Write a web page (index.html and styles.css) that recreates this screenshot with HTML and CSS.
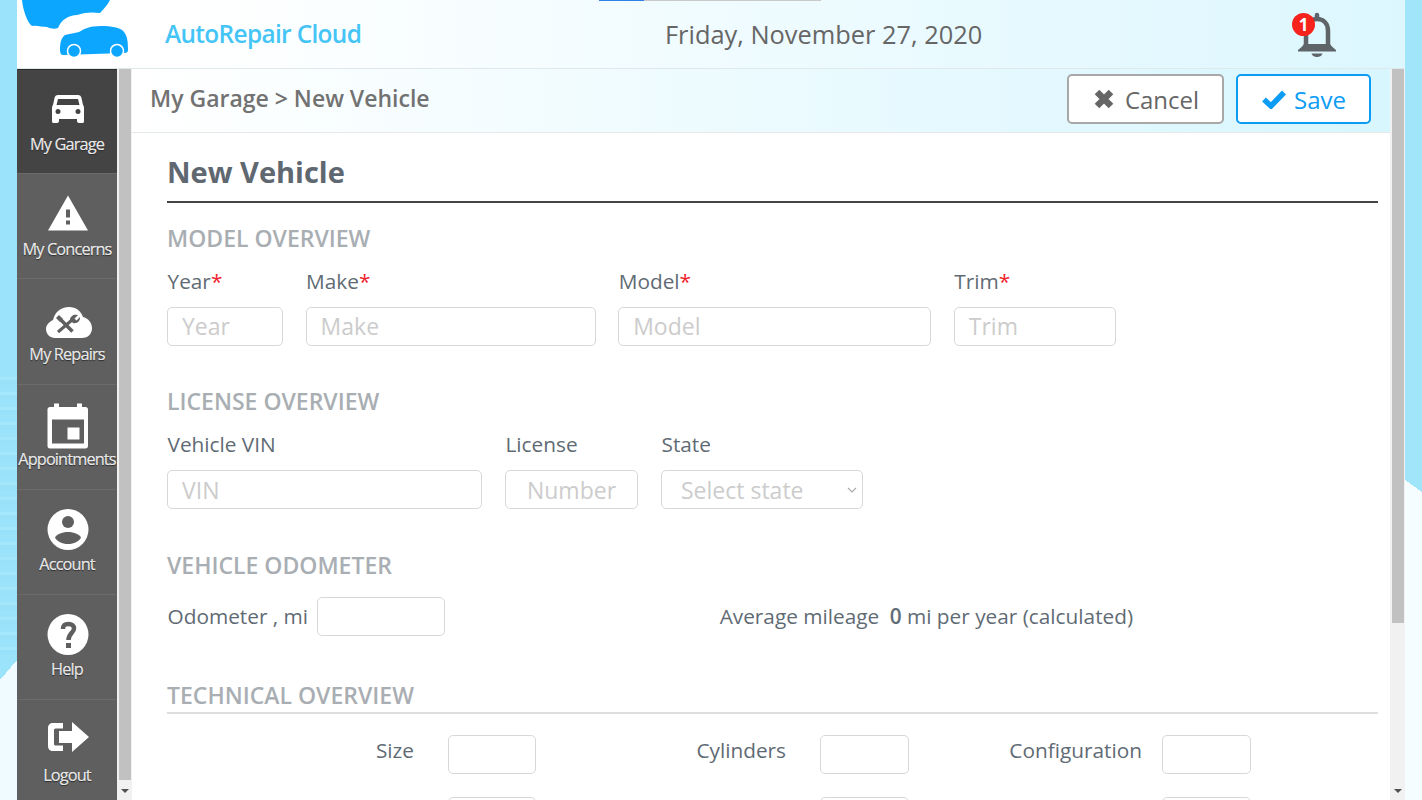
FILE: index.html
```html
<!DOCTYPE html>
<html lang="en">
<head>
<meta charset="utf-8">
<title>AutoRepair Cloud</title>
<link rel="stylesheet" href="styles.css">
</head>
<body>
<div class="shell">
  <div class="edge edge-left"></div>
  <div class="app">
    <div class="loader"><span class="loader-on"></span><span class="loader-off"></span></div>
    <header class="topbar">
      <svg class="logo" viewBox="0 0 148 68" width="148" height="68">
        <path class="logo-fill" d="M5 0C6 10 10 22 15 26C20 25 25 27 30 27C34 29 38 29 41 28C44 20 52 15 60 15C68 12 76 12 83 13C87 9 91 4 93 0Z"/>
        <path class="logo-fill" d="M43 50C43 43 44 38 48 35C52 34 58 33 62 32C67 29 72 26 84 26C95 26 102 28 105 30C110 34 111 40 111 50C111 52 110 53 107 53L46 55C44 55 43 53 43 50Z"/>
        <circle class="logo-ring" cx="57" cy="51" r="6.500"/>
        <circle class="logo-ring" cx="100" cy="51" r="6.500"/>
      </svg>
      <div class="brand">AutoRepair Cloud</div>
      <div class="date">Friday, November 27, 2020</div>
      <div class="bell">
        <svg viewBox="0 0 40 46" width="40" height="46">
          <path class="bell-line" d="M20 3V7M9 33V19C9 11 14 7 20 7C26 7 31 11 31 19V33"/>
          <path class="bell-solid" d="M1 38C3 36 5 35 7 32H33C35 35 37 36 39 38V39.500H1Z"/>
          <path class="bell-solid" d="M14.500 41.500H25.500C25 44 22 45 20 45C18 45 15 44 14.500 41.500Z"/>
        </svg>
        <span class="badge">1</span>
      </div>
    </header>
    <div class="body">
      <nav class="sidebar">
        <a class="nav-item active">
          <svg class="nav-icon" viewBox="0 0 48 50">
            <path class="white" fill-rule="evenodd" d="M14 12H34C36 12 37 13 37.500 15L39 22C40 23 40 24 40 26V38C40 40 39 40 38 40H35C34 40 33 39 33 38V36H15V38C15 39 14 40 13 40H10C9 40 8 40 8 38V26C8 24 8 23 9 22L10.500 15C11 13 12 12 14 12ZM14 16 12.500 22H35.500L34 16ZM14 26A2.500 2.500 0 1 0 14 31A2.500 2.500 0 1 0 14 26ZM34 26A2.500 2.500 0 1 0 34 31A2.500 2.500 0 1 0 34 26Z"/>
          </svg>
          <span>My Garage</span>
        </a>
        <a class="nav-item">
          <svg class="nav-icon" viewBox="0 0 48 50">
            <path class="white" fill-rule="evenodd" d="M4 42.500 24 7.500 44 42.500ZM22 21.500V29.500H26V21.500ZM22 32.500V36.500H26V32.500Z"/>
          </svg>
          <span>My Concerns</span>
        </a>
        <a class="nav-item">
          <svg class="nav-icon" viewBox="0 0 48 50">
            <path class="white" d="M11 45C6 45 2 41 2 36C2 32 5 29 9 27C11 19 17 14 25 14C32 14 37 18 39 24C44 25 48 30 48 35C48 41 44 45 38 45Z"/>
            <path class="tool-thin" d="M15 25 28.500 38.500"/>
            <path class="tool" d="M28 27 14 39"/>
            <path class="dark" d="M26 27C26 23 30 21 34 22L30.500 25.500 32.500 27.500 36 24C36.500 28 33 31 29 30Z"/>
            <path class="dark" d="M12 25 15 22 19 26 16 29Z"/>
          </svg>
          <span>My Repairs</span>
        </a>
        <a class="nav-item">
          <svg class="nav-icon" viewBox="0 0 48 50">
            <path class="white" fill-rule="evenodd" d="M10 5.500H15V9H33V5.500H38V9H41.500C43 9 44 10 44 11.500V48C44 49.500 43 50.500 41.500 50.500H6C4.500 50.500 3.500 49.500 3.500 48V11.500C3.500 10 4.500 9 6 9H10ZM8 21.500V45.500H40V21.500ZM23.500 29.500H35.500V41.500H23.500Z"/>
          </svg>
          <span>Appointments</span>
        </a>
        <a class="nav-item">
          <svg class="nav-icon" viewBox="0 0 48 50">
            <circle class="white" cx="24" cy="26.500" r="20.500"/>
            <circle class="dark" cx="24" cy="19" r="6"/>
            <path class="dark" d="M11 34.500C12 31.500 18 29 24 29C30 29 36 31.500 37 34.500C35 38.500 30 41 24 41C18 41 13 38.500 11 34.500Z"/>
          </svg>
          <span>Account</span>
        </a>
        <a class="nav-item">
          <svg class="nav-icon" viewBox="0 0 48 50">
            <circle class="white" cx="24" cy="26.500" r="20.500"/>
            <path class="question" d="M19 21C19 17 21 16 24.500 16C28 16 30 18 30 20.500C30 25 24.500 25 24.500 32"/>
            <rect class="dark" x="22" y="35" width="5" height="5"/>
          </svg>
          <span>Help</span>
        </a>
        <a class="nav-item">
          <svg class="nav-icon" viewBox="0 0 48 50">
            <path class="white" d="M9 9H19V14.500H12C11 14.500 10 15 10 16V30C10 31 11 31.500 12 31.500H19V37H9C6 37 4 35 4 32V14C4 11 6 9 9 9Z"/>
            <path class="white" d="M28 8 45 23 28 38V29H15V17H28Z"/>
          </svg>
          <span>Logout</span>
        </a>
      </nav>
      <div class="scrollbar scrollbar-nav">
        <div class="thumb thumb-nav"></div>
        <div class="arrow"></div>
      </div>
      <main class="main">
        <div class="crumbbar">
          <div class="crumb">My Garage &gt; New Vehicle</div>
          <div class="actions">
            <button class="btn btn-cancel">
              <svg viewBox="0 0 20 20" width="20" height="20"><path class="cancel-x" d="M3 3 17 17M17 3 3 17"/></svg>
              Cancel
            </button>
            <button class="btn btn-save">
              <svg viewBox="0 0 24 20" width="24" height="20"><path class="save-check" d="M2 10.500 9 17 22 3.500"/></svg>
              Save
            </button>
          </div>
        </div>
        <div class="form">
          <h1 class="title">New Vehicle</h1>

          <h2 class="section section-first">MODEL OVERVIEW</h2>
          <div class="fields fields-model">
            <label class="field"><span class="label">Year<b>*</b></span><input class="input" placeholder="Year"></label>
            <label class="field"><span class="label">Make<b>*</b></span><input class="input" placeholder="Make"></label>
            <label class="field"><span class="label">Model<b>*</b></span><input class="input" placeholder="Model"></label>
            <label class="field"><span class="label">Trim<b>*</b></span><input class="input" placeholder="Trim"></label>
          </div>

          <h2 class="section">LICENSE OVERVIEW</h2>
          <div class="fields fields-license">
            <label class="field"><span class="label">Vehicle VIN</span><input class="input" placeholder="VIN"></label>
            <label class="field"><span class="label">License</span><input class="input input-center" placeholder="Number"></label>
            <label class="field"><span class="label">State</span>
              <span class="select-wrap">
                <select class="input select"><option>Select state</option></select>
                <svg class="chevron" viewBox="0 0 10 6" width="10" height="6"><path d="M1 1 5 5 9 1"/></svg>
              </span>
            </label>
          </div>

          <h2 class="section section-odo">VEHICLE ODOMETER</h2>
          <div class="odo">
            <span class="label odo-label">Odometer , mi</span>
            <input class="input input-odo">
            <span class="label mileage odo-label">Average mileage <strong>0</strong> mi per year (calculated)</span>
          </div>

          <h2 class="section section-tech">TECHNICAL OVERVIEW</h2>
          <div class="tech">
            <span class="label tl">Size</span><input class="input">
            <span class="label tl">Cylinders</span><input class="input">
            <span class="label tl tl-config">Configuration</span><input class="input">
            <span class="label tl"></span><input class="input">
            <span class="label tl"></span><input class="input">
            <span class="label tl"></span><input class="input">
          </div>
        </div>
      </main>
      <div class="scrollbar scrollbar-main">
        <div class="thumb thumb-main"></div>
        <div class="arrow"></div>
      </div>
    </div>
  </div>
  <div class="edge edge-right"></div>
</div>
</body>
</html>
```
FILE: styles.css
```css
* { box-sizing: border-box; }
html, body { margin: 0; height: 100%; overflow: hidden; }
body { font-family: "Open Sans", "Liberation Sans", sans-serif; color: #666; background: #eefbff; }

.shell { display: flex; height: 800px; overflow: hidden; }

.edge { flex: 0 0 17px; height: 800px; background-repeat: no-repeat; }
.edge-left {
  background-color: #effbff;
  background-image:
    linear-gradient(to bottom right, #9be3fa 50%, transparent 50%),
    repeating-linear-gradient(to bottom, #9be3fa 0 7px, #a4e6fa 7px 10px, #98e1f8 10px 15px),
    linear-gradient(#9be3fa, #9be3fa);
  background-size: 17px 20px, 17px 290px, 17px 370px;
  background-position: 0 660px, 0 370px, 0 0;
}
.edge-right {
  background-color: #f6fdff;
  background-image:
    linear-gradient(to bottom left, #a0e5fa 50%, transparent 50%),
    linear-gradient(#a0e5fa, #a0e5fa);
  background-size: 17px 12px, 17px 480px;
  background-position: 0 480px, 0 0;
}

.app { position: relative; flex: 0 0 1388px; display: flex; flex-direction: column; height: 800px; background: #fff; }

.loader { position: absolute; top: 0; left: 582px; display: flex; height: 1px; }
.loader-on { width: 45px; background: #2f7fe6; }
.loader-off { width: 177px; background: #c9c9c9; }

.topbar {
  flex: 0 0 68px; display: flex; align-items: center;
  background: linear-gradient(to right, #fff 0%, #fff 12%, #dcf7fe 100%);
  border-bottom: 1px solid #dfe8ea;
}
.logo { flex: none; align-self: flex-start; }
.logo-fill { fill: #0ca6ff; }
.logo-ring { fill: #0ca6ff; stroke: #fff; stroke-width: 1.500; }
.brand { flex: 0 0 500px; font-size: 24.400px; font-weight: 600; letter-spacing: -.65px; color: #45c5f6; margin-top: -1px; }
.date { flex: 0 0 632px; font-size: 25.400px; color: #666; margin-top: -1px; }
.bell { position: relative; flex: none; width: 40px; height: 46px; margin-top: 2px; }
.bell-line { fill: none; stroke: #5e6467; stroke-width: 4.500; stroke-linecap: round; }
.bell-solid { fill: #5e6467; }
.badge {
  position: absolute; left: -5px; top: 1px; width: 23px; height: 23px; border-radius: 50%;
  background: #f5231b; color: #fff; font-size: 17px; font-weight: 700; line-height: 23px; text-align: center;
}

.body { flex: 1; display: flex; min-height: 0; }

.sidebar { flex: 0 0 100px; background: #5f5f5f; overflow: hidden; }
.nav-item {
  display: flex; flex-direction: column; align-items: center; height: 105.200px; padding-top: 13.500px;
  border-bottom: 1px solid #6b6b6b; color: #e6e6e6;
  font-size: 16.300px; letter-spacing: -.85px; line-height: 22px; text-shadow: 0 1px 1px #2c2c2c, 0 0 .6px #fff;
  white-space: nowrap;
}
.nav-item.active { background: #444; border-top: 1px solid #2c2c2c; padding-top: 12.500px; }
.nav-icon { flex: none; width: 48px; height: 50px; margin-left: 2px; overflow: visible; }
.white { fill: #fff; }
.dark { fill: #5f5f5f; }
.tool { stroke: #5f5f5f; stroke-width: 3; fill: none; }
.tool-thin { stroke: #5f5f5f; stroke-width: 3.500; fill: none; }
.question { fill: none; stroke: #5f5f5f; stroke-width: 4.500; }

.scrollbar { display: flex; flex-direction: column; background: #f1f1f1; }
.scrollbar-nav { flex: 0 0 15px; padding: 0 1px 0 2px; }
.scrollbar-main { flex: 0 0 15px; padding: 0 1px 0 2px; }
.thumb { background: #c1c1c1; flex: none; }
.thumb-nav { height: 711px; }
.thumb-main { height: 554px; }
.arrow {
  margin: auto auto 7px; width: 0; height: 0;
  border-left: 4px solid transparent; border-right: 4px solid transparent; border-top: 4px solid #505050;
}

.main { flex: 1; min-width: 0; display: flex; flex-direction: column; background: #fff; overflow: hidden; }
.crumbbar {
  flex: 0 0 64px; display: flex; align-items: center; justify-content: space-between;
  padding: 0 19px 0 18px; border-bottom: 1px solid #e6e9ea;
  background: linear-gradient(to right, #fff 0%, #d8f6fe 100%);
}
.crumb { font-size: 23px; font-weight: 600; color: #727272; margin-bottom: 5px; }
.actions { display: flex; gap: 12px; margin-top: -3px; }
.btn {
  display: flex; align-items: center; justify-content: center; gap: 11px; height: 50px; padding: 0 6px;
  background: #fff; border-radius: 5px; border: 2px solid; font: 400 24px "Open Sans", sans-serif;
}
.btn-cancel { width: 157px; padding-left: 8px; border-color: #a8a8a8; color: #666; }
.btn-save { width: 135px; gap: 8px; padding-left: 7px; border-color: #0c9cf5; color: #0c9cf5; }
.cancel-x { fill: none; stroke: #666; stroke-width: 6.500; }
.save-check { fill: none; stroke: #0c9cf5; stroke-width: 5.500; }

.form { padding: 0 12px 0 35px; }
.title {
  margin: 0; padding: 20px 0 10px; font-size: 29px; line-height: 38px; font-weight: 700; color: #5f6870;
  border-bottom: 2px solid #444;
}
.section { margin: 40px 0 0; font-size: 23px; line-height: 30px; font-weight: 600; color: #a9aeb3; }
.section-first { margin-top: 20px; }
.section-odo { margin-top: 41px; }
.section-tech { margin-top: 44px; padding-bottom: 2px; border-bottom: 2px solid #dedede; }

.fields { display: grid; column-gap: 22.600px; margin-top: 14px; }
.fields-model { grid-template-columns: 116px 290px 313px 162px; }
.fields-model .input { padding-bottom: 2px; }
.fields-license { grid-template-columns: 315px 133px 202px; column-gap: 23px; }
.field { display: flex; flex-direction: column; gap: 12px; }
.label { font-size: 20.800px; line-height: 28px; color: #5f6b74; padding-left: .5px; }
.label b { color: #f01c2c; font-weight: 400; }
.input {
  width: 100%; height: 39px; padding: 0 14px; background: #fff;
  border: 1px solid #d8d8d8; border-radius: 5px; font: 400 23px "Open Sans", sans-serif; color: #ccc;
}
.input::placeholder { color: #ccc; opacity: 1; }
.input-center { text-align: center; padding: 0 6px; }
.select-wrap { position: relative; display: block; }
.select { appearance: none; padding-left: 19px; }
.chevron { position: absolute; right: 6px; top: 17px; fill: none; stroke: #aaa; stroke-width: 1.200; }

.odo { display: flex; align-items: center; margin-top: 17px; }
.odo-label { margin-top: -2px; }
.input-odo { flex: 0 0 128px; margin-left: 9px; }
.mileage { margin-left: 274px; white-space: pre-wrap; }
.mileage strong { font-weight: 600; margin-left: 5px; }

.tech { display: grid; grid-template-columns: 281px 88px 284px 89px 253px 89px; gap: 23px 0; margin-top: 21px; }
.tl { justify-self: end; margin-right: 34px; margin-top: 1px; }
.tl-config { margin-right: 20px; }
```
